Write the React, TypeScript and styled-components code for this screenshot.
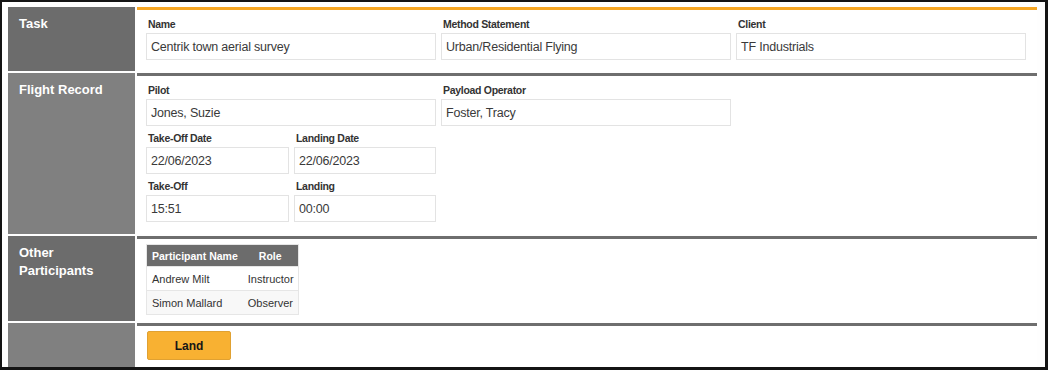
import React from "react";
import styled, { createGlobalStyle } from "styled-components";

const GlobalStyle = createGlobalStyle`
  html, body { margin: 0; padding: 0; background: #ffffff; }
  body { font-family: "Liberation Sans", Arial, sans-serif; }
  * { box-sizing: border-box; }
`;

const Frame = styled.div`
  width: 1048px;
  height: 370px;
  overflow: hidden;
  background: #fefefe;
  border-style: solid;
  border-color: #141414;
  border-width: 2px 3px 3px 2px;
  padding: 5px 6px 0 6px;
`;

const Form = styled.div`
  display: grid;
  grid-template-columns: 127px 900px;
  column-gap: 2px;
  row-gap: 2px;
`;

const SectionLabel = styled.div<{ $dark?: boolean }>`
  background: ${(p) => (p.$dark ? "#6c6c6c" : "#808080")};
  color: #ffffff;
  font-weight: bold;
  font-size: 13px;
  line-height: 18px;
  padding: 8px 11px 7px 11px;
`;

const SectionBody = styled.div<{ $accent?: boolean; $padBottom: number }>`
  border-top: 3px solid ${(p) => (p.$accent ? "#f6a623" : "#6e6e6e")};
  background: #ffffff;
  padding: 5px 9px ${(p) => p.$padBottom}px 9px;
  display: flex;
  flex-direction: column;
  gap: 3px;
`;

const FieldRow = styled.div<{ $cols: string }>`
  display: grid;
  grid-template-columns: ${(p) => p.$cols};
  column-gap: 5px;
`;

const Field = styled.div`
  display: flex;
  flex-direction: column;
`;

const FieldLabel = styled.label`
  display: block;
  font-size: 10.5px;
  font-weight: bold;
  letter-spacing: -0.3px;
  line-height: 14px;
  padding: 2px 0 0 2px;
  margin-bottom: 2px;
  color: #333333;
`;

const ValueBox = styled.div`
  height: 27px;
  border: 1px solid #e3e3e3;
  background: #ffffff;
  padding: 0 4px;
  display: flex;
  align-items: center;
  font-size: 12.5px;
  letter-spacing: -0.2px;
  color: #3a3a3a;
  white-space: nowrap;
  overflow: hidden;
`;

const Table = styled.table`
  border-collapse: collapse;
  border: 1px solid #e6e6e6;
  align-self: flex-start;
  font-size: 11px;
`;

const HeadCell = styled.th`
  background: #6c6c6c;
  color: #ffffff;
  font-weight: bold;
  font-size: 10.5px;
  height: 22px;
  padding: 0 5px;
  text-align: center;
  white-space: nowrap;
`;

const BodyRow = styled.tr<{ $striped?: boolean }>`
  background: ${(p) => (p.$striped ? "#f8f8f8" : "#ffffff")};
`;

const BodyCell = styled.td`
  height: 24px;
  padding: 0 4px 0 5px;
  border-top: 1px solid #e6e6e6;
  color: #333333;
  white-space: nowrap;
`;

const LandButton = styled.button`
  width: 84px;
  height: 29px;
  margin-left: 1px;
  background: #f8b132;
  border: 1px solid #e0a132;
  border-radius: 2px;
  font-family: "Liberation Sans", Arial, sans-serif;
  font-weight: bold;
  font-size: 12px;
  color: #161616;
  cursor: pointer;
  padding: 0;
`;

type F = { label: string; value: string };

const FieldItem = ({ label, value }: F) => (
  <Field>
    <FieldLabel>{label}</FieldLabel>
    <ValueBox>{value}</ValueBox>
  </Field>
);

const participants = [
  { name: "Andrew Milt", role: "Instructor" },
  { name: "Simon Mallard", role: "Observer" },
];

export default function App() {
  return (
    <>
      <GlobalStyle />
      <Frame>
        <Form>
          <SectionLabel $dark>Task</SectionLabel>
          <SectionBody $accent $padBottom={11}>
            <FieldRow $cols="290px 290px 290px">
              <FieldItem label="Name" value="Centrik town aerial survey" />
              <FieldItem label="Method Statement" value="Urban/Residential Flying" />
              <FieldItem label="Client" value="TF Industrials" />
            </FieldRow>
          </SectionBody>

          <SectionLabel>Flight Record</SectionLabel>
          <SectionBody $padBottom={12}>
            <FieldRow $cols="290px 290px">
              <FieldItem label="Pilot" value="Jones, Suzie" />
              <FieldItem label="Payload Operator" value="Foster, Tracy" />
            </FieldRow>
            <FieldRow $cols="143px 142px">
              <FieldItem label="Take-Off Date" value="22/06/2023" />
              <FieldItem label="Landing Date" value="22/06/2023" />
            </FieldRow>
            <FieldRow $cols="143px 142px">
              <FieldItem label="Take-Off" value="15:51" />
              <FieldItem label="Landing" value="00:00" />
            </FieldRow>
          </SectionBody>

          <SectionLabel $dark>Other Participants</SectionLabel>
          <SectionBody $padBottom={6}>
            <Table>
              <thead>
                <tr>
                  <HeadCell>Participant Name</HeadCell>
                  <HeadCell>Role</HeadCell>
                </tr>
              </thead>
              <tbody>
                {participants.map((p, i) => (
                  <BodyRow key={p.name} $striped={i % 2 === 1}>
                    <BodyCell>{p.name}</BodyCell>
                    <BodyCell>{p.role}</BodyCell>
                  </BodyRow>
                ))}
              </tbody>
            </Table>
          </SectionBody>

          <SectionLabel />
          <SectionBody $padBottom={10}>
            <div>
              <LandButton type="button">Land</LandButton>
            </div>
          </SectionBody>
        </Form>
      </Frame>
    </>
  );
}
